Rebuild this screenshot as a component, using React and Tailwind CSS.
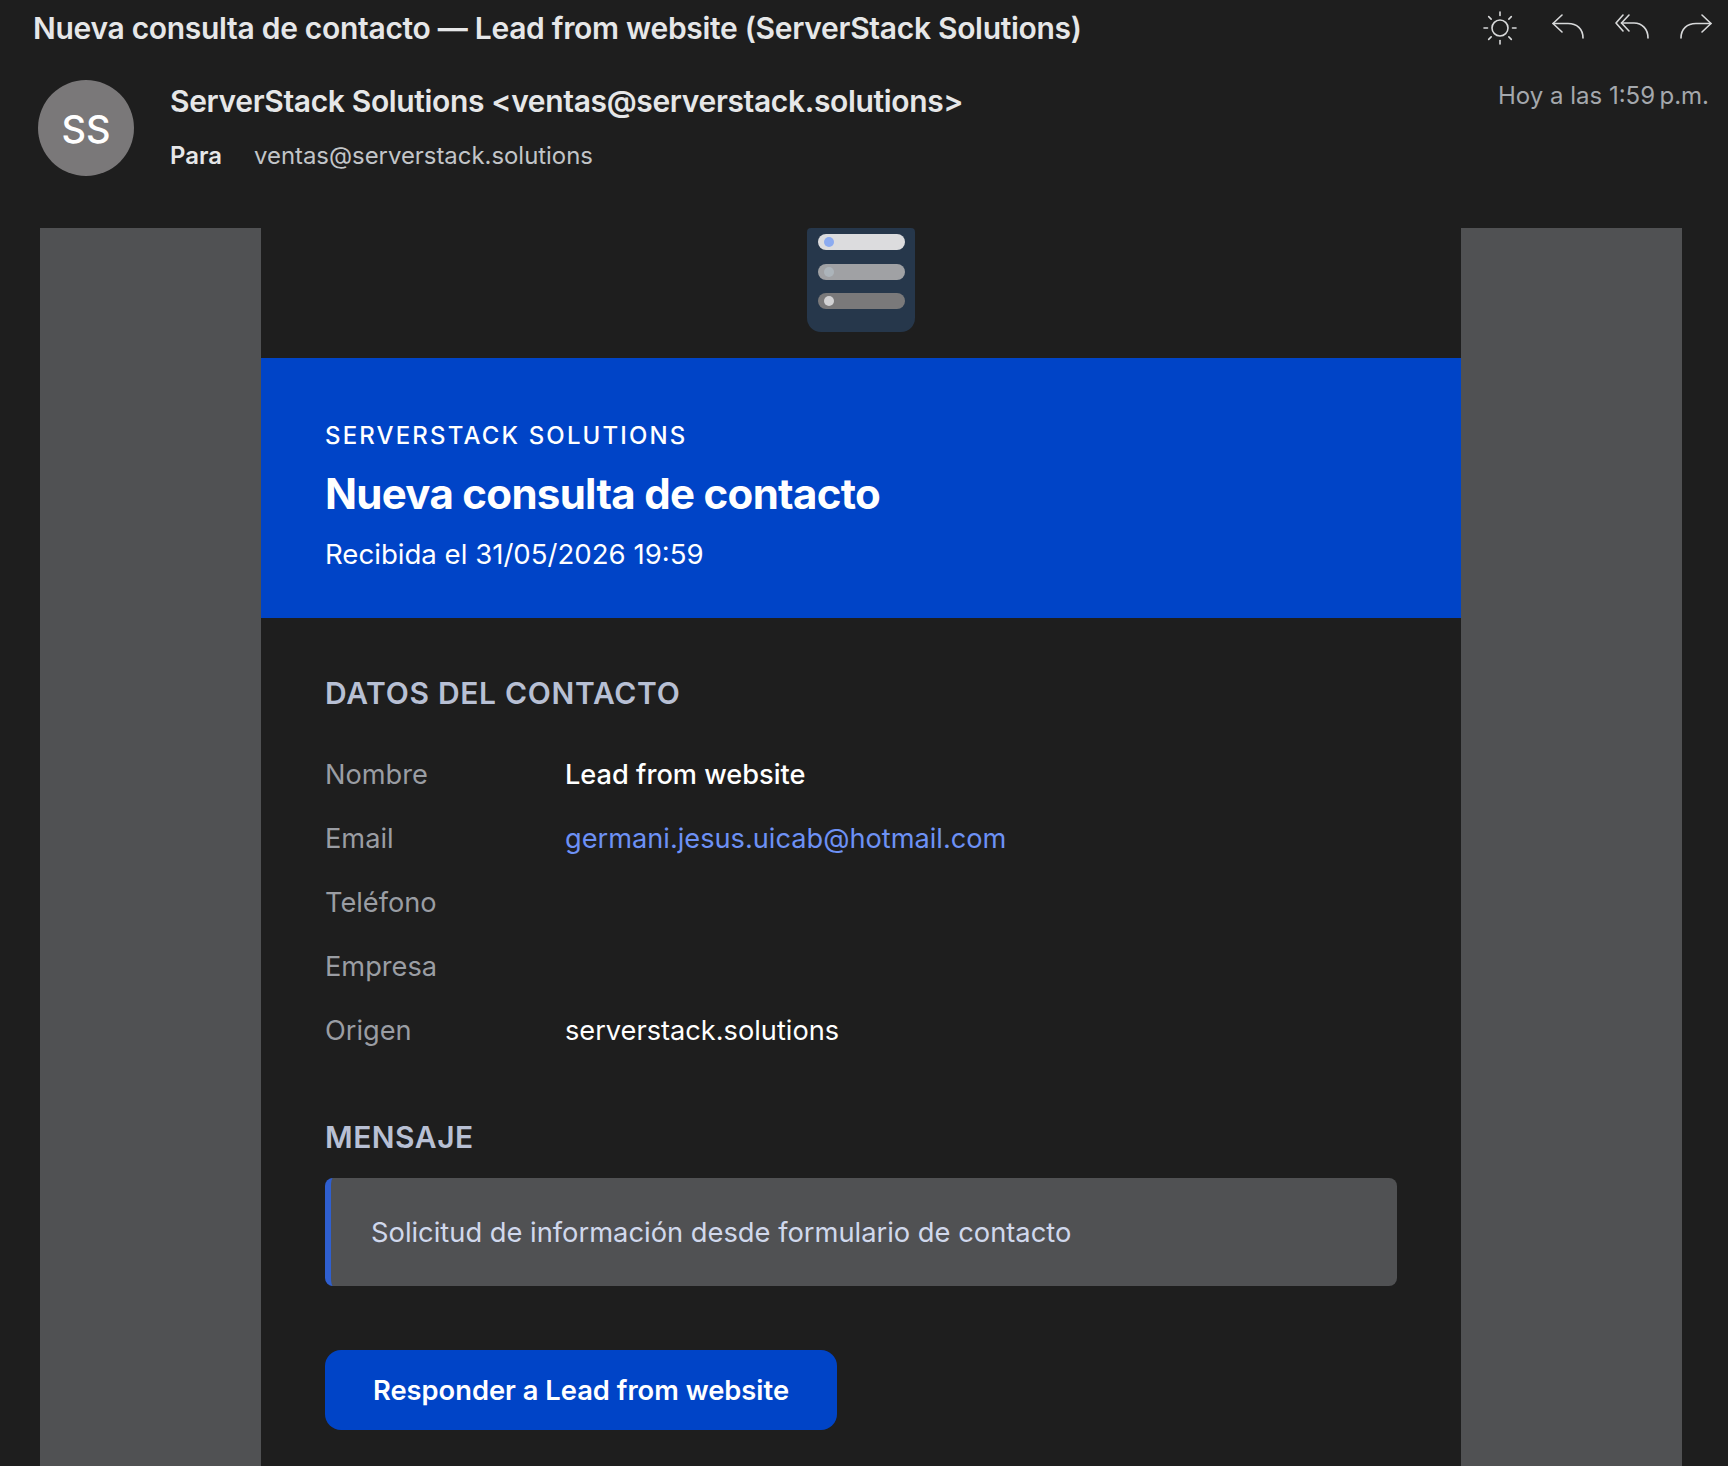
const F = { fontFamily: '"Inter", "Liberation Sans", sans-serif' };

function Sun() {
  const rays = [0, 45, 90, 135, 180, 225, 270, 315];
  return (
    <svg width="34" height="34" viewBox="0 0 34 34" fill="none" stroke="#d8d9da" strokeWidth="1.6" strokeLinecap="round">
      <circle cx="17" cy="17" r="8" />
      {rays.map((a) => (
        <line key={a} x1="17" y1="4.5" x2="17" y2="1" transform={`rotate(${a} 17 17)`} />
      ))}
    </svg>
  );
}
function Reply() {
  return (
    <svg width="34" height="30" viewBox="0 0 34 30" fill="none" stroke="#d8d9da" strokeWidth="1.6" strokeLinecap="round" strokeLinejoin="round">
      <path d="M11 2 L2 10.5 L11 19" />
      <path d="M2 10.5 H17 C26 10.5 32 16 32 25" />
    </svg>
  );
}
function ReplyAll() {
  return (
    <svg width="34" height="30" viewBox="0 0 34 30" fill="none" stroke="#d8d9da" strokeWidth="1.6" strokeLinecap="round" strokeLinejoin="round">
      <path d="M8 2 L1 10 L8 18" />
      <path d="M14 2 L6.5 10 L14 18" />
      <path d="M6.5 10 H19 C27 10 33 16 33 25" />
    </svg>
  );
}
function Forward() {
  return (
    <svg width="34" height="30" viewBox="0 0 34 30" fill="none" stroke="#d8d9da" strokeWidth="1.6" strokeLinecap="round" strokeLinejoin="round">
      <path d="M23 2 L32 10.5 L23 19" />
      <path d="M32 10.5 H17 C8 10.5 2 16 2 25" />
    </svg>
  );
}

function Row({ label, children }) {
  return (
    <div className="flex h-[64px] items-center pt-[2px] text-[27.2px]">
      <div className="w-[240px] text-[#9a9da3]">{label}</div>
      <div>{children}</div>
    </div>
  );
}

function Bar({ bar, dot }) {
  return (
    <div className={`flex h-[16px] w-[87px] items-center rounded-full pl-[6px] ${bar}`}>
      <span className={`h-[10px] w-[10px] rounded-full ${dot}`} />
    </div>
  );
}

export default function App() {
  return (
    <div style={F} className="h-[1466px] w-[1728px] overflow-hidden bg-[#1e1e1e] text-white">
      <div className="flex h-[56px] items-center justify-between pl-[33px] pr-[15px]">
        <div className="text-[30px] font-semibold tracking-[-0.3px] text-[#e6e7e8]">Nueva consulta de contacto — Lead from website (ServerStack Solutions)</div>
        <div className="flex items-center gap-[30px]">
          <div className="mr-[4px]"><Sun /></div>
          <Reply />
          <ReplyAll />
          <Forward />
        </div>
      </div>

      <div className="flex h-[172px] justify-between pl-[38px] pr-[19px]">
        <div className="flex pt-[24px]">
          <div className="flex h-[96px] w-[96px] items-center justify-center rounded-full bg-[#7a7879] pt-[2px] text-[38px] font-medium text-white">SS</div>
          <div className="ml-[36px]">
            <div className="mt-[-1px] text-[30px] font-semibold tracking-[-0.35px] text-[#e6e7e8]">ServerStack Solutions &lt;ventas@serverstack.solutions&gt;</div>
            <div className="mt-[14px] flex items-center text-[23.9px]">
              <span className="w-[84px] font-semibold text-[#e6e7e8]">Para</span>
              <span className="text-[#c2c5c8]">ventas@serverstack.solutions</span>
            </div>
          </div>
        </div>
        <div className="pt-[22px] text-[24px] text-[#a4a8ad]">Hoy a las 1:59{"\u202F"}p.m.</div>
      </div>

      <div className="mx-[40px] flex h-[1238px] w-[1642px] bg-[#505153]">
        <div className="ml-[221px] h-full w-[1200px] bg-[#1e1e1e]">
          <div className="flex h-[130px] justify-center">
            <div className="flex h-[104px] w-[108px] flex-col items-center gap-[13.5px] rounded-[14px] rounded-t-[4px] bg-[#26374b] pt-[6px]">
              <Bar bar="bg-[#dcdcde]" dot="bg-[#8cabf0]" />
              <Bar bar="bg-[#a0a1a4]" dot="bg-[#acb4ba]" />
              <Bar bar="bg-[#7a797a]" dot="bg-[#d2d2d4]" />
            </div>
          </div>

          <div className="flex h-[260px] flex-col bg-[#0044c7] pl-[64px] pt-[63px]">
            <div className="text-[24px] font-medium leading-[30px] tracking-[2.15px]">SERVERSTACK SOLUTIONS</div>
            <div className="mt-[16px] text-[42px] font-bold leading-[54px] tracking-[-0.7px]">Nueva consulta de contacto</div>
            <div className="mt-[16px] text-[27.6px] leading-[34px]">Recibida el 31/05/2026 19:59</div>
          </div>

          <div className="px-[64px] pt-[57px]">
            <div className="text-[30px] font-semibold leading-[36px] tracking-[0.7px] text-[#b8c0d4]">DATOS DEL CONTACTO</div>
            <div className="mt-[31px]">
              <Row label="Nombre"><span className="font-medium text-white">Lead from website</span></Row>
              <Row label="Email"><span className="text-[#6d91f5]">germani.jesus.uicab@hotmail.com</span></Row>
              <Row label="Teléfono" />
              <Row label="Empresa" />
              <Row label="Origen"><span className="text-white">serverstack.solutions</span></Row>
            </div>
            <div className="mt-[57px] text-[30px] font-semibold leading-[36px] tracking-[0.5px] text-[#b8c0d4]">MENSAJE</div>
            <div className="mt-[23px] flex h-[108px] items-center rounded-[8px] border-l-[6px] border-[#2f5fd0] bg-[#505153] pl-[40px] pt-[2px] text-[27.3px] text-[#d0d8ec]">
              Solicitud de información desde formulario de contacto
            </div>
            <div className="mt-[64px] flex h-[80px] w-[512px] items-center justify-center rounded-[16px] bg-[#0044c7] pt-[2px] text-[27.3px] font-semibold text-white">
              Responder a Lead from website
            </div>
          </div>
        </div>
      </div>
    </div>
  );
}
